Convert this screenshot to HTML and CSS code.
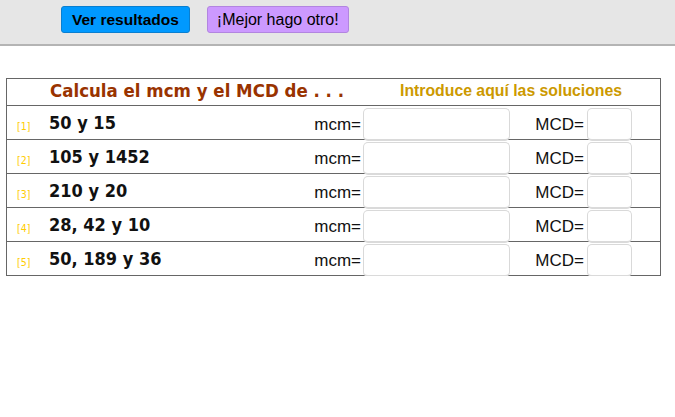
FILE: index.html
```html
<!DOCTYPE html>
<html lang="es">
<head>
<meta charset="utf-8">
<title>mcm y MCD</title>
<link rel="stylesheet" href="styles.css">
</head>
<body>
<header class="toolbar">
  <button class="btn btn-check">Ver resultados</button>
  <button class="btn btn-new">¡Mejor hago otro!</button>
</header>
<main class="sheet">
  <div class="head-row">
    <span class="title">Calcula el mcm y el MCD de . . .</span>
    <span class="hint">Introduce aquí las soluciones</span>
  </div>
  <div class="row">
    <span class="num">[1]</span>
    <span class="expr">50 y 15</span>
    <span class="lbl lbl-mcm">mcm=</span>
    <input class="field field-mcm" type="text">
    <span class="lbl lbl-mcd">MCD=</span>
    <input class="field field-mcd" type="text">
  </div>
  <div class="row">
    <span class="num">[2]</span>
    <span class="expr">105 y 1452</span>
    <span class="lbl lbl-mcm">mcm=</span>
    <input class="field field-mcm" type="text">
    <span class="lbl lbl-mcd">MCD=</span>
    <input class="field field-mcd" type="text">
  </div>
  <div class="row">
    <span class="num">[3]</span>
    <span class="expr">210 y 20</span>
    <span class="lbl lbl-mcm">mcm=</span>
    <input class="field field-mcm" type="text">
    <span class="lbl lbl-mcd">MCD=</span>
    <input class="field field-mcd" type="text">
  </div>
  <div class="row">
    <span class="num">[4]</span>
    <span class="expr">28, 42 y 10</span>
    <span class="lbl lbl-mcm">mcm=</span>
    <input class="field field-mcm" type="text">
    <span class="lbl lbl-mcd">MCD=</span>
    <input class="field field-mcd" type="text">
  </div>
  <div class="row">
    <span class="num">[5]</span>
    <span class="expr">50, 189 y 36</span>
    <span class="lbl lbl-mcm">mcm=</span>
    <input class="field field-mcm" type="text">
    <span class="lbl lbl-mcd">MCD=</span>
    <input class="field field-mcd" type="text">
  </div>
</main>
</body>
</html>
```

FILE: styles.css
```css
html, body {
  margin: 0;
  padding: 0;
  background: #ffffff;
  font-family: "Liberation Sans", Arial, sans-serif;
  color: #000;
}

.toolbar {
  height: 46px;
  background: #e6e6e6;
  border-bottom: 2px solid #b4b4b4;
  display: flex;
  align-items: flex-start;
  gap: 17px;
  padding: 6px 0 0 61px;
  box-sizing: border-box;
}

.btn {
  height: 27px;
  padding: 0 10px;
  border-radius: 3px;
  font-family: "Liberation Sans", Arial, sans-serif;
  font-size: 16px;
  color: #000;
  cursor: pointer;
  line-height: 25px;
}

.btn-check {
  background: #0099ff;
  border: 1px solid #0a7fd0;
  font-weight: bold;
  font-size: 15.5px;
}

.btn-new {
  background: #cc99ff;
  border: 1px solid #b285e0;
  padding: 0 9px;
}

.sheet {
  margin: 32px 0 0 6px;
  width: 655px;
  border: 1px solid #666;
  border-bottom: none;
  box-sizing: border-box;
}

.head-row {
  height: 27px;
  border-bottom: 1px solid #666;
  box-sizing: border-box;
  display: flex;
  align-items: flex-start;
  line-height: 23px;
}

.title {
  margin-left: 43px;
  width: 350px;
  font-family: "DejaVu Sans Condensed", "DejaVu Sans", sans-serif;
  font-stretch: condensed;
  font-weight: bold;
  font-size: 18.5px;
  color: #993300;
}

.hint {
  font-weight: bold;
  font-size: 15.8px;
  color: #cc9900;
}

.row {
  height: 34px;
  border-bottom: 1px solid #666;
  box-sizing: border-box;
  display: flex;
  align-items: flex-start;
}

.num {
  margin: 14px 0 0 10px;
  width: 32px;
  line-height: 12px;
  font-family: "DejaVu Sans Condensed", "DejaVu Sans", sans-serif;
  font-stretch: condensed;
  font-size: 10.5px;
  color: #ffcc00;
}

.expr {
  width: 264px;
  line-height: 33px;
  font-family: "DejaVu Sans Condensed", "DejaVu Sans", sans-serif;
  font-stretch: condensed;
  font-weight: bold;
  font-size: 18px;
  color: #111;
}

.lbl {
  margin-top: 2px;
  line-height: 33px;
  font-size: 17px;
  text-align: right;
  color: #111;
}

.lbl-mcm {
  width: 48px;
}

.lbl-mcd {
  width: 74px;
}

.field {
  margin: 2px 0 0 0;
  height: 33px;
  box-sizing: border-box;
  border: 1px solid #d9d9d9;
  border-bottom: 2px solid #dadada;
  border-radius: 5px;
  background: #fff;
  padding: 0 4px;
  position: relative;
  z-index: 1;
}

.field-mcm {
  margin-left: 2px;
  width: 147px;
}

.field-mcd {
  margin-left: 3px;
  width: 45px;
}
```
